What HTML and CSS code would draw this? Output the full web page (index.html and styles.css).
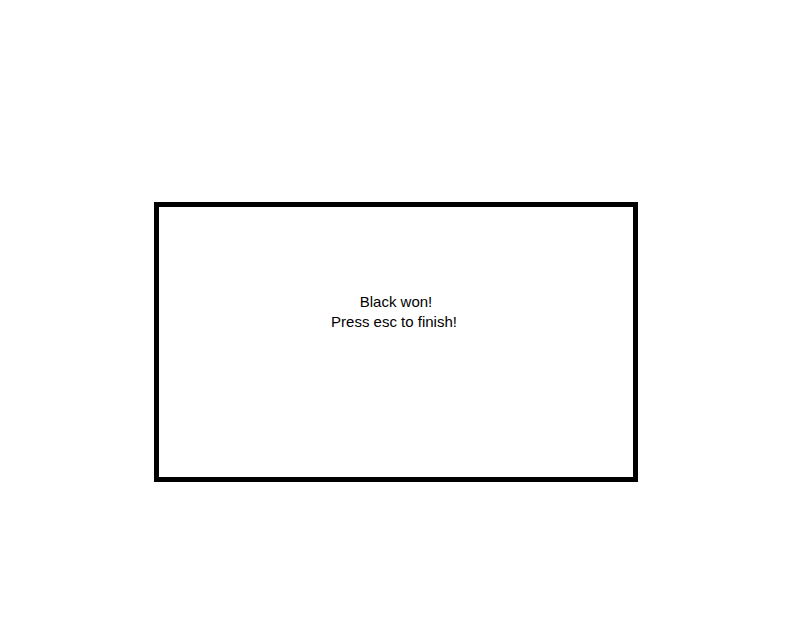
FILE: index.html
```html
<!DOCTYPE html>
<html lang="en">
<head>
  <meta charset="UTF-8">
  <title>Game over</title>
  <link rel="stylesheet" href="styles.css">
</head>
<body>
  <div class="stage">
    <div class="dialog">
      <p class="msg">Black won!</p>
      <p class="msg hint">Press esc to finish!</p>
    </div>
  </div>
</body>
</html>
```

FILE: styles.css
```css
* {
  margin: 0;
  padding: 0;
  box-sizing: border-box;
}
body {
  background: #fff;
  font-family: "Liberation Sans", Arial, sans-serif;
  color: #000;
}
.stage {
  height: 632px;
  padding: 202px 0 0 154px;
}
.dialog {
  width: 484px;
  height: 280px;
  border: 5px solid #000;
  padding-top: 85px;
  text-align: center;
}
.msg {
  font-size: 15px;
  line-height: 20px;
}
.hint {
  padding-right: 4px;
}
```
